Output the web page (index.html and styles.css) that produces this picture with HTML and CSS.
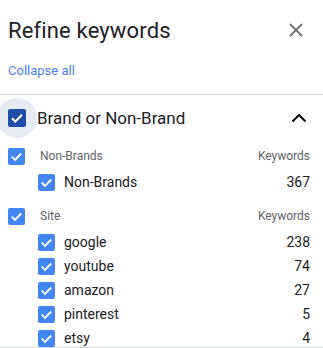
FILE: index.html
```html
<!DOCTYPE html>
<html>
<head>
<meta charset="utf-8">
<link rel="stylesheet" href="styles.css">
</head>
<body>
<div class="panel">
  <div class="header">
    <h1 class="title">Refine keywords</h1>
    <svg class="close" width="14" height="14" viewBox="0 0 14 14"><path d="M1 1L13 13M13 1L1 13" stroke="#757575" stroke-width="2" fill="none"/></svg>
  </div>
  <div class="collapse">Collapse all</div>
  <div class="list">
    <div class="brand-row">
      <span class="halo"><span class="cb cb-dark"><svg viewBox="0 0 18 18"><path d="M4 9.2L7.4 12.5L14 5.8" stroke="#fff" stroke-width="2" fill="none"/></svg></span></span>
      <span class="brand-label">Brand or Non-Brand</span>
      <svg class="chev" width="16" height="10" viewBox="0 0 16 10"><path d="M1.5 8.5L8 2L14.5 8.5" stroke="#000" stroke-width="2" fill="none"/></svg>
    </div>

    <div class="group">
      <div class="ghead">
        <span class="cb"><svg viewBox="0 0 18 18"><path d="M4 9.2L7.4 12.5L14 5.8" stroke="#fff" stroke-width="2" fill="none"/></svg></span>
        <span class="gname">Non-Brands</span>
        <span class="gcol">Keywords</span>
      </div>
      <div class="item">
        <span class="cb"><svg viewBox="0 0 18 18"><path d="M4 9.2L7.4 12.5L14 5.8" stroke="#fff" stroke-width="2" fill="none"/></svg></span>
        <span class="iname">Non-Brands</span>
        <span class="inum">367</span>
      </div>
    </div>

    <div class="group">
      <div class="ghead">
        <span class="cb"><svg viewBox="0 0 18 18"><path d="M4 9.2L7.4 12.5L14 5.8" stroke="#fff" stroke-width="2" fill="none"/></svg></span>
        <span class="gname">Site</span>
        <span class="gcol">Keywords</span>
      </div>
      <div class="item">
        <span class="cb"><svg viewBox="0 0 18 18"><path d="M4 9.2L7.4 12.5L14 5.8" stroke="#fff" stroke-width="2" fill="none"/></svg></span>
        <span class="iname">google</span>
        <span class="inum">238</span>
      </div>
      <div class="item">
        <span class="cb"><svg viewBox="0 0 18 18"><path d="M4 9.2L7.4 12.5L14 5.8" stroke="#fff" stroke-width="2" fill="none"/></svg></span>
        <span class="iname">youtube</span>
        <span class="inum">74</span>
      </div>
      <div class="item">
        <span class="cb"><svg viewBox="0 0 18 18"><path d="M4 9.2L7.4 12.5L14 5.8" stroke="#fff" stroke-width="2" fill="none"/></svg></span>
        <span class="iname">amazon</span>
        <span class="inum">27</span>
      </div>
      <div class="item">
        <span class="cb"><svg viewBox="0 0 18 18"><path d="M4 9.2L7.4 12.5L14 5.8" stroke="#fff" stroke-width="2" fill="none"/></svg></span>
        <span class="iname">pinterest</span>
        <span class="inum">5</span>
      </div>
      <div class="item">
        <span class="cb"><svg viewBox="0 0 18 18"><path d="M4 9.2L7.4 12.5L14 5.8" stroke="#fff" stroke-width="2" fill="none"/></svg></span>
        <span class="iname">etsy</span>
        <span class="inum">4</span>
      </div>
    </div>
  </div>
</div>
</body>
</html>
```
FILE: styles.css
```css
html, body {
  margin: 0;
  padding: 0;
  background: #fff;
}
body {
  font-family: Roboto, "Liberation Sans", sans-serif;
  color: #202124;
}
.panel {
  width: 323px;
  height: 348px;
  overflow: hidden;
}
.header {
  display: flex;
  align-items: center;
  justify-content: space-between;
  height: 60px;
  padding: 0 20px 0 8px;
}
.title {
  margin: 0;
  font-size: 22px;
  font-weight: 400;
  color: #202124;
  letter-spacing: 0.15px;
}
.close {
  display: block;
}
.collapse {
  margin-top: 1px;
  padding-left: 8px;
  font-size: 13px;
  line-height: 20px;
  color: #4a7ff2;
}
.list {
  margin-top: 13px;
  border-top: 1px solid #dadce0;
  border-bottom: 1px solid #dadce0;
  height: 252px;
  overflow: hidden;
}
.brand-row {
  display: flex;
  align-items: center;
  height: 40px;
  margin-top: 3px;
  padding-right: 16px;
}
.halo {
  width: 40px;
  height: 40px;
  margin-left: -3px;
  border-radius: 50%;
  background: #e6ebf3;
  display: flex;
  align-items: center;
  justify-content: center;
  flex: none;
}
.brand-label {
  flex: 1;
  font-size: 17px;
  margin-left: 0;
  color: #202124;
}
.chev {
  display: block;
}
.cb {
  width: 17px;
  height: 17px;
  border-radius: 2px;
  background: #4285f4;
  display: flex;
  flex: none;
}
.cb svg {
  width: 17px;
  height: 17px;
}
.cb-dark {
  width: 18px;
  height: 18px;
  background: #1f4ca6;
}
.cb-dark svg {
  width: 18px;
  height: 18px;
}
.group {
  margin-top: 6px;
  margin-bottom: 10px;
}
.ghead {
  display: flex;
  align-items: center;
  height: 24px;
  padding: 0 13px 0 8px;
  font-size: 12px;
  color: #5f6368;
}
.gname {
  flex: 1;
  margin-left: 15px;
}
.item {
  display: flex;
  align-items: center;
  height: 24px;
  padding: 0 13px 0 38px;
  font-size: 14px;
  color: #202124;
}
.ghead + .item {
  margin-top: 2px;
}
.iname {
  flex: 1;
  margin-left: 9px;
}
```
